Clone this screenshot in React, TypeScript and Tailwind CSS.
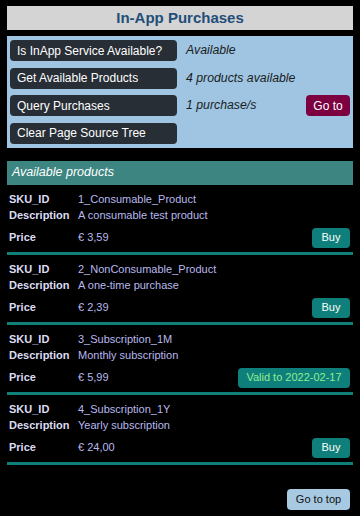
import React from 'react';

interface Product {
  sku: string;
  description: string;
  price: string;
  validTo?: string;
}

const products: Product[] = [
  { sku: '1_Consumable_Product', description: 'A consumable test product', price: '€ 3,59' },
  { sku: '2_NonConsumable_Product', description: 'A one-time purchase', price: '€ 2,39' },
  { sku: '3_Subscription_1M', description: 'Monthly subscription', price: '€ 5,99', validTo: '2022-02-17' },
  { sku: '4_Subscription_1Y', description: 'Yearly subscription', price: '€ 24,00' },
];

const actions = [
  { label: 'Is InApp Service Available?', result: 'Available' },
  { label: 'Get Available Products', result: '4 products available' },
  { label: 'Query Purchases', result: '1 purchase/s', goTo: true },
  { label: 'Clear Page Source Tree', result: '' },
];

const ProductRow: React.FC<{ product: Product }> = ({ product }) => (
  <div className="pt-[7px] pl-[2px] border-b-[3px] border-[#0f7f78] pb-[4px]">
    <div className="flex h-[16px] items-center text-[11px]">
      <span className="w-[69px] font-bold text-[#dcdcf4]">SKU_ID</span>
      <span className="text-[#b8b8ee]">{product.sku}</span>
    </div>
    <div className="flex h-[16px] items-center text-[11px]">
      <span className="w-[69px] font-bold text-[#dcdcf4]">Description</span>
      <span className="text-[#b8b8ee]">{product.description}</span>
    </div>
    <div className="mt-[4px] flex h-[20px] items-center pr-[3px] text-[11px]">
      <span className="w-[69px] font-bold text-[#dcdcf4]">Price</span>
      <span className="text-[#b8b8ee]">{product.price}</span>
      <div className="ml-auto">
        {product.validTo ? (
          <button className="h-[20px] w-[112px] rounded-[4px] bg-[#0e7f7a] text-[11px] text-[#90ee90]">
            Valid to {product.validTo}
          </button>
        ) : (
          <button className="h-[20px] w-[38px] rounded-[4px] bg-[#0e7f7a] text-[11px] text-white">
            Buy
          </button>
        )}
      </div>
    </div>
  </div>
);

export default function App() {
  return (
    <div className="min-h-[516px] bg-black px-[7px] pt-[6px] font-['Liberation_Sans',Arial,sans-serif]">
      {/* Title */}
      <div className="flex h-[24px] items-center justify-center bg-[#d4d4d4] text-[15px] font-bold text-[#1f4e79]">
        In-App Purchases
      </div>

      {/* Actions panel */}
      <div className="mt-[6px] flex flex-col gap-[6.5px] bg-[#9fc5e2] pt-[4px] pb-[4px] pl-[3px] pr-[3px]">
        {actions.map((a) => (
          <div key={a.label} className="flex h-[21px] items-center">
            <button className="h-[21px] w-[167px] rounded-[4px] bg-[#272e36] pl-[7px] text-left text-[12px] text-white">
              {a.label}
            </button>
            <span className="ml-[9px] text-[12.3px] italic text-[#1a1d22]">{a.result}</span>
            {a.goTo && (
              <button className="ml-auto h-[21px] w-[44px] rounded-[4px] bg-[#7d0041] text-[12px] text-white">
                Go to
              </button>
            )}
          </div>
        ))}
      </div>

      {/* Products */}
      <div className="mt-[13px] flex h-[24px] items-center bg-[#3d8580] pl-[5px] text-[12.5px] italic text-white">
        Available products
      </div>
      {products.map((p) => (
        <ProductRow key={p.sku} product={p} />
      ))}

      <div className="mt-[24px] flex justify-end pr-[3px]">
        <button className="h-[21px] w-[63px] rounded-[4px] bg-[#a7c9e2] text-[11px] text-[#111]">
          Go to top
        </button>
      </div>
    </div>
  );
}
